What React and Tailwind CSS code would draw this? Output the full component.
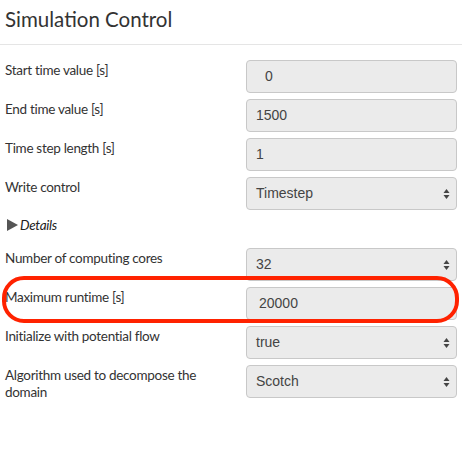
import React from 'react';

const rows = [
  { label: 'Start time value [s]', value: '0', pad: 'pl-[18px]' },
  { label: 'End time value [s]', value: '1500' },
  { label: 'Time step length [s]', value: '1' },
  { label: 'Write control', value: 'Timestep', select: true },
];

const detailRows = [
  { label: 'Number of computing cores', value: '32', select: true },
  { label: 'Maximum runtime [s]', value: '20000', highlight: true, pad: 'pl-[12px]' },
  { label: 'Initialize with potential flow', value: 'true', select: true },
  { label: 'Algorithm used to decompose the domain', value: 'Scotch', select: true },
];

function Arrows() {
  return (
    <svg width="7" height="11" viewBox="0 0 7 11" className="absolute right-[6px] top-1/2 -translate-y-1/2">
      <path d="M3.5 0.5 L6.5 4.5 L0.5 4.5 Z" fill="#444" />
      <path d="M3.5 10.5 L6.5 6.5 L0.5 6.5 Z" fill="#444" />
    </svg>
  );
}

function Row({ label, value, select, highlight, pad = 'pl-[9px]' }) {
  return (
    <div className="relative flex items-start h-[33px] mb-[6px]">
      <div className="w-[246px] pl-[5px] pr-[36px] pt-[2px] text-[13.5px] tracking-[-0.3px] leading-[17px] text-[#333]">{label}</div>
      <div className={`relative w-[211px] h-[33px] rounded-[4px] border border-[#c8c8c8] bg-[#ebebeb] flex items-center ${pad} text-[14px] text-[#444] font-['Liberation_Sans',Arial,sans-serif]`}>
        {value}
        {select && <Arrows />}
      </div>
      {highlight && (
        <div className="absolute left-[2px] right-[3px] top-[-11px] bottom-[-3px] rounded-[22px] border-[4px] border-[#ff2200]" />
      )}
    </div>
  );
}

export default function App() {
  return (
    <div className="w-[462px] h-[450px] bg-white font-['Lato','Noto_Sans',sans-serif] text-[#333]">
      <div className="h-[45px] border-b border-[#e5e5e5] pl-[5px] pt-[5px] text-[20.5px] leading-[28px] text-[#333]">
        Simulation Control
      </div>
      <div className="pt-[15px]">
        {rows.map((r) => (
          <Row key={r.label} {...r} />
        ))}
        <div className="flex items-center h-[18px] pl-[7px] mb-[14px] text-[13.5px] tracking-[-0.3px] italic text-[#222]">
          <svg width="11" height="12" viewBox="0 0 11 12" className="mr-[2px]">
            <path d="M0 0 L11 6 L0 12 Z" fill="#555" />
          </svg>
          Details
        </div>
        {detailRows.map((r) => (
          <Row key={r.label} {...r} />
        ))}
      </div>
    </div>
  );
}
